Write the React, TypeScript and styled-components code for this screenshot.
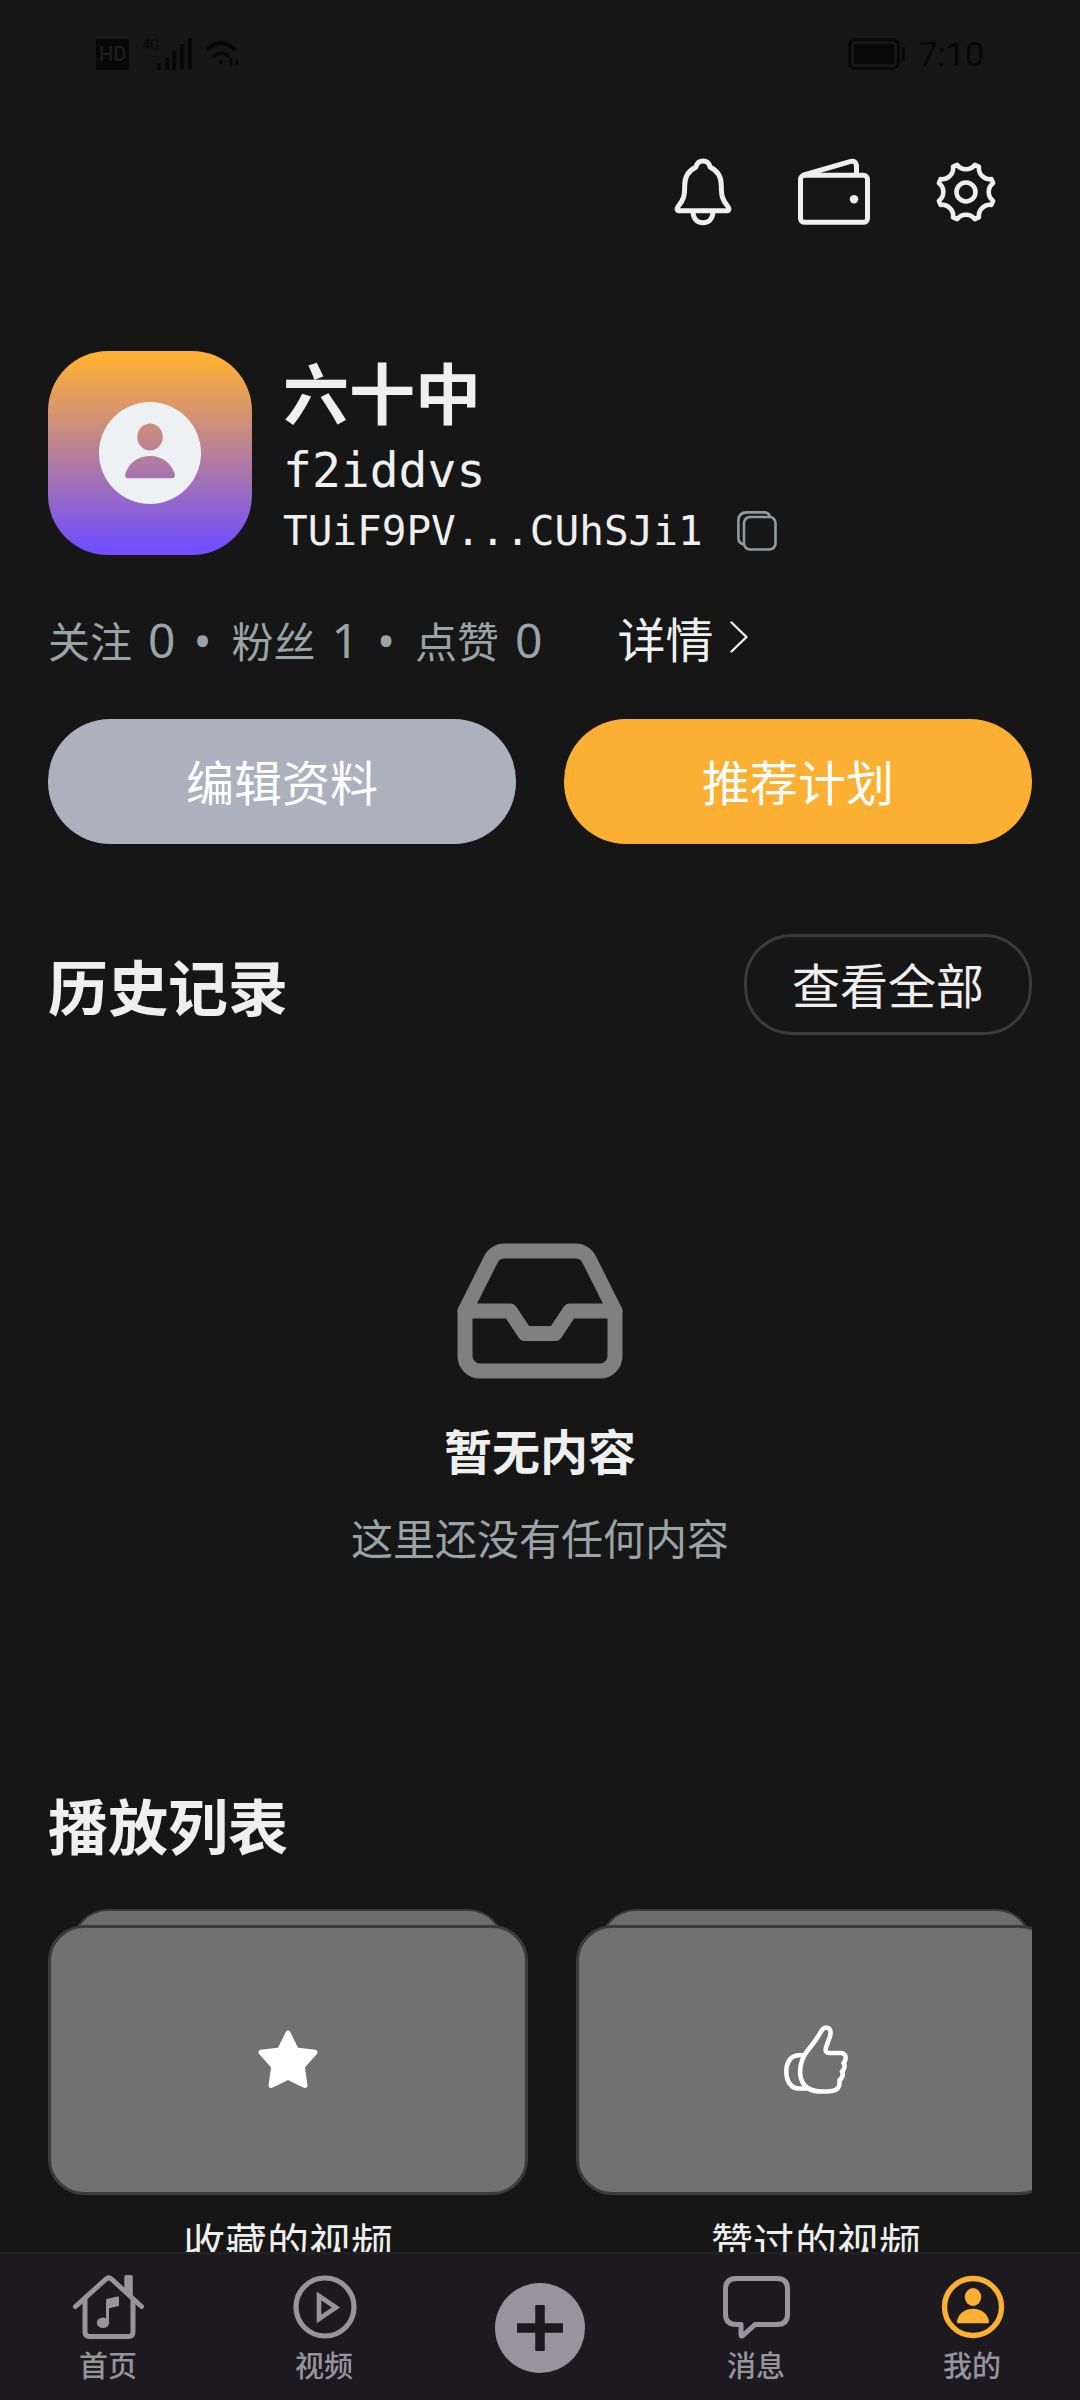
import React from "react";
import styled, { createGlobalStyle } from "styled-components";

const color = {
  page: "#161616",
  nav: "#1c191f",
  text: "#efefef",
  muted: "#9aa3a6",
  accent: "#fbb034",
  slate: "#abb1bd",
  line: "#3b3b3b",
  card: "#717171",
  tab: "#98949b",
  status: "#080808",
};

const cjk = `"Noto Sans CJK SC", "Noto Sans", sans-serif`;
const latin = `"Noto Sans", "Noto Sans CJK SC", sans-serif`;
const mono = `"DejaVu Sans Mono", "Noto Sans CJK SC", monospace`;

const GlobalStyle = createGlobalStyle`
  *, *::before, *::after { box-sizing: border-box; }
  body { margin: 0; background: ${color.page}; color: ${color.text}; font-family: ${cjk}; }
  h1, h2, h3, p, dl, dt, dd, ul { margin: 0; padding: 0; }
  ul { list-style: none; }
  button { margin: 0; padding: 0; border: 0; background: none; color: inherit; font-family: inherit; cursor: pointer; }
  a { color: inherit; text-decoration: none; }
  svg { display: block; flex: none; }
`;

const Shell = styled.div`
  display: flex;
  flex-direction: column;
  height: 100vh;
  background: ${color.page};
`;

const Scroller = styled.main`
  flex: 1;
  min-height: 0;
  overflow-y: auto;
  scrollbar-width: none;
`;

const StatusBar = styled.div`
  display: flex;
  align-items: center;
  justify-content: space-between;
  height: 108px;
  padding: 0 96px;
  color: ${color.status};
`;

const StatusGroup = styled.div<{ $gap: number }>`
  display: flex;
  align-items: center;
  gap: ${(p) => p.$gap}px;
`;

const Clock = styled.span`
  font: 34px/40px Roboto, sans-serif;
`;

const Toolbar = styled.header`
  display: flex;
  align-items: center;
  justify-content: flex-end;
  gap: 36px;
  height: 168px;
  padding: 0 66px;
`;

const IconButton = styled.button`
  display: grid;
  place-items: center;
  width: 96px;
  height: 96px;
`;

const Content = styled.div`
  padding: 75px 48px 96px;
`;

const Profile = styled.section`
  display: flex;
  gap: 31px;
`;

const Avatar = styled.div`
  display: grid;
  place-items: center;
  flex: none;
  width: 204px;
  height: 204px;
  border-radius: 60px;
  background: linear-gradient(#fdb036 4%, #724ffb 96%);
`;

const Identity = styled.div`
  display: flex;
  flex-direction: column;
`;

const DisplayName = styled.h1`
  margin-bottom: 10px;
  font-size: 66px;
  line-height: 78px;
  font-weight: 700;
`;

const Handle = styled.p`
  font: 48px/62px ${mono};
`;

const AddressRow = styled.div`
  display: flex;
  align-items: center;
  gap: 34px;
  font: 41px/60px ${mono};
`;

const CopyButton = styled.button`
  color: #939b9e;
`;

const StatsRow = styled.div`
  display: flex;
  align-items: baseline;
  gap: 75px;
  margin-top: 46px;
`;

const Stats = styled.dl`
  display: flex;
  align-items: baseline;
  gap: 18px;
  color: ${color.muted};
`;

const Stat = styled.div`
  display: flex;
  align-items: baseline;
  gap: 16px;

  dt { font-size: 42px; line-height: 60px; }
  dd { font: 48px/60px ${latin}; }

  & + &::before {
    content: "•";
    margin-right: 4px;
    font: 48px/60px ${latin};
  }
`;

const DetailLink = styled.a`
  display: flex;
  align-items: center;
  gap: 16px;
  font-size: 48px;
  line-height: 60px;
`;

const Actions = styled.div`
  display: grid;
  grid-template-columns: 1fr 1fr;
  gap: 48px;
  margin-top: 49px;
`;

const ActionButton = styled.button<{ $fill: string }>`
  height: 125px;
  padding-bottom: 3px;
  border-radius: 62px;
  background: ${(p) => p.$fill};
  color: #fff;
  font-size: 48px;
  line-height: 60px;
`;

const SectionHead = styled.div`
  display: flex;
  align-items: center;
  justify-content: space-between;
`;

const SectionTitle = styled.h2`
  font-size: 60px;
  line-height: 72px;
  font-weight: 700;
`;

const History = styled.section`
  margin-top: 90px;
`;

const OutlineButton = styled.button`
  height: 101px;
  padding: 0 45px 3px;
  border: 3px solid ${color.line};
  border-radius: 48px;
  font-size: 48px;
  line-height: 60px;
`;

const Empty = styled.div`
  display: flex;
  flex-direction: column;
  align-items: center;
  padding-top: 186px;
`;

const EmptyTitle = styled.h3`
  margin-top: 18px;
  font-size: 48px;
  line-height: 60px;
  font-weight: 700;
`;

const EmptyText = styled.p`
  margin-top: 28px;
  color: ${color.muted};
  font-size: 42px;
  line-height: 60px;
`;

const Playlists = styled.section`
  margin-top: 221px;
`;

const CardRow = styled.ul`
  display: flex;
  gap: 48px;
  margin-top: 49px;
  overflow-x: auto;
  scrollbar-width: none;
`;

const Card = styled.li`
  flex: 0 0 480px;
`;

const CardLink = styled.a`
  display: block;
  text-align: center;
`;

const CardBack = styled.div`
  height: 48px;
  margin: 0 24px -32px;
  border: 2px solid ${color.line};
  border-radius: 36px 36px 0 0;
  background: #6d6d6d;
`;

const CardCover = styled.div`
  position: relative;
  display: grid;
  place-items: center;
  aspect-ratio: 16 / 9;
  border: 3px solid ${color.line};
  border-radius: 36px;
  background: ${color.card};
`;

const CardTitle = styled.h3`
  margin-top: 16px;
  font-size: 42px;
  line-height: 60px;
  font-weight: 400;
`;

const TabBar = styled.nav`
  display: grid;
  grid-template-columns: repeat(5, 1fr);
  flex: none;
  padding: 20px 0 18px;
  border-top: 2px solid #222123;
  background: ${color.nav};
  color: ${color.tab};
`;

const Tab = styled.a`
  display: flex;
  flex-direction: column;
  align-items: center;
  gap: 6px;
  font-size: 29px;
  line-height: 36px;
  font-weight: 500;
`;

const CreateButton = styled.button`
  display: grid;
  place-items: center;
  place-self: center;
  width: 90px;
  height: 90px;
  border-radius: 50%;
  background: ${color.tab};
  color: ${color.nav};
`;

/* Eight blunt teeth joined by concave arcs. */
function gearPath(c: number, r: number) {
  const at = (deg: number) => {
    const a = (deg * Math.PI) / 180;
    return `${(c + r * Math.cos(a)).toFixed(2)} ${(c + r * Math.sin(a)).toFixed(2)}`;
  };
  let d = `M${at(18)}`;
  for (let k = 0; k < 8; k++) {
    const t = 22.5 + 45 * k;
    d += `L${at(t + 4.5)}A11 11 0 0 0 ${at(t + 40.5)}`;
  }
  return d + "Z";
}

const line = {
  fill: "none",
  stroke: "currentColor",
  strokeLinecap: "round" as const,
  strokeLinejoin: "round" as const,
};

const BellIcon = () => (
  <svg width="72" height="72" viewBox="0 0 72 72" {...line} strokeWidth="5">
    <path d="M37 5c-3.800 0-6.200 2.400-7.200 6.200C22 14.800 18.700 21 18.700 29.500c0 10.500-1 14-6.200 20.500-2.600 3.200-1.200 4.800 1.500 4.800h46c2.700 0 4.100-1.600 1.500-4.800-5.200-6.500-6.200-10-6.200-20.500 0-8.500-3.300-14.700-11.100-18.300C43.200 7.400 40.800 5 37 5z" />
    <path d="M27 55.500c0 7 4.300 11.200 10 11.200s10-4.200 10-11.200" />
  </svg>
);

const WalletIcon = () => (
  <svg width="72" height="72" viewBox="0 0 72 72" {...line} strokeWidth="5">
    <rect x="2.500" y="19.300" width="67" height="47" rx="4" />
    <path d="M6 19L52 5.600Q58.500 4 58.500 11V18" />
    <circle cx="56" cy="43.300" r="4.200" fill="currentColor" stroke="none" />
  </svg>
);

const GearIcon = () => (
  <svg width="72" height="72" viewBox="0 0 72 72" {...line} strokeWidth="4.600">
    <path d={gearPath(36, 28.5)} />
    <circle cx="36" cy="36" r="9.500" />
  </svg>
);

const PersonDisc = () => (
  <svg width="102" height="102" viewBox="0 0 102 102" fill="#eef1f3" fillRule="evenodd">
    <path d="M51 0a51 51 0 1 1 0 102A51 51 0 1 1 51 0zM51 21.500a12.700 13.500 0 1 0 0 27a12.700 13.500 0 1 0 0-27zM51 54c-12 0-21 7-24.600 17.500-.9 3 .2 4.800 2.600 4.800h44c2.400 0 3.500-1.800 2.600-4.800C72 61 63 54 51 54z" />
  </svg>
);

const CopyIcon = () => (
  <svg width="40" height="40" viewBox="0 0 40 40" {...line} strokeWidth="2.600">
    <rect x="7" y="6" width="31.500" height="32.500" rx="6" />
    <path d="M33 5.500C32 2.500 30 1.400 27 1.400H10C4.500 1.400 1.400 4.500 1.400 10v17c0 3.500 1.800 5.500 4.800 6.300" />
  </svg>
);

const ChevronIcon = () => (
  <svg width="18" height="32" viewBox="0 0 18 32" {...line} strokeWidth="2.400">
    <path d="M1.500 1.500L16.500 16L1.500 30.500" />
  </svg>
);

const InboxIcon = () => (
  <svg width="180" height="180" viewBox="0 0 24 24" {...line} strokeWidth="2" stroke="#808080">
    <path d="M22 12h-6l-2 3h-4l-2-3H2" />
    <path d="M5.450 5.110L2 12v6a2 2 0 0 0 2 2h16a2 2 0 0 0 2-2v-6l-3.450-6.890A2 2 0 0 0 16.760 4H7.240a2 2 0 0 0-1.790 1.110z" />
  </svg>
);

const StarIcon = () => (
  <svg width="60" height="60" viewBox="0 0 60 60" fill="#fff" stroke="#fff" strokeWidth="5" strokeLinejoin="round">
    <path d="M30 3L38.300 20L57 22.300L44.300 36.500L47 55.500L30 47.300L13 55.500L15.700 36.500L3 22.300L21.700 20z" />
  </svg>
);

const ThumbIcon = () => (
  <svg width="64" height="70" viewBox="0 0 64 70" {...line} strokeWidth="4.600" stroke="#fff">
    <path d="M37 6.500C39 2.500 42 1.800 44.500 3.200c2.800 1.600 2.300 5 1.500 8L42 22.500c-1 3.500 0 5.500 3.500 5.500h11c4 0 5.500 2.500 5 5.500.3 2-1 3-2 4.500 2 2.500 1 6-1.500 8.500 1.500 3 .5 6.500-2.500 8.500.8 7-2 10.500-8 11-9 1-19 .5-24-3-9-6.500-9.500-20-3-33C23.500 24.500 31 18 37 6.500z" />
    <path d="M20 30.200h-5C7 30.200 2.300 37 2.300 46.500S7 63.500 15 63.500h9" />
  </svg>
);

const HomeIcon = () => (
  <svg width="72" height="66" viewBox="0 0 72 66" {...line} strokeWidth="5">
    <path d="M3.500 32.500L34 5q2.700-2.400 5.400 0L69.500 32.500" />
    <path d="M13 26v32q0 4.500 4.500 4.500h39q4.500 0 4.500-4.500V26" />
    <path d="M52.300 18V3q0-2 2-2h4.500q2 0 2 2v21z" fill="currentColor" stroke="none" />
    <g fill="currentColor" stroke="none">
      <path d="M34 26.500q0-1.500 1.500-1.800L45.500 22.600q1.500-.2 1.500 1.200v8.200l-10 2.200V48h-3z" />
      <ellipse cx="31" cy="48.700" rx="6.200" ry="5.300" />
    </g>
  </svg>
);

const PlayIcon = () => (
  <svg width="72" height="66" viewBox="0 0 72 66" {...line} strokeWidth="5.200">
    <circle cx="37" cy="33" r="29" />
    <path d="M31 22L48 33.500L31 45z" strokeWidth="4.600" strokeLinejoin="miter" />
  </svg>
);

const PlusIcon = () => (
  <svg width="46" height="46" viewBox="0 0 46 46" stroke="currentColor" strokeWidth="9.500">
    <path d="M23 0V46M0 23H46" />
  </svg>
);

const MessageIcon = () => (
  <svg width="72" height="66" viewBox="0 0 72 66" {...line} strokeWidth="5">
    <path d="M16.500 4.500h40.500q10.500 0 10.500 10.500v25q0 10.500-10.500 10.500H35L23 61.500q-2 1.500-2-1v-10h-4.500Q5.500 50.500 5.500 40V15Q5.500 4.500 16.500 4.500z" />
  </svg>
);

const MeIcon = () => (
  <svg width="72" height="66" viewBox="0 0 72 66" fill={color.accent}>
    <circle cx="37" cy="33" r="28.500" fill="none" stroke={color.accent} strokeWidth="5.400" />
    <ellipse cx="37" cy="23" rx="8.200" ry="9" />
    <path d="M37 34.700c-8.500 0-14.500 5-16 12.300-.2 1.500.3 2.300 1.500 2.300h29c1.200 0 1.700-.8 1.500-2.300-1.500-7.300-7.500-12.300-16-12.300z" />
  </svg>
);

const HdBadge = styled.span`
  padding: 0 3px;
  border-radius: 2px;
  background: ${color.status};
  color: #1d1d1d;
  font: 500 20px/31px Roboto, sans-serif;
`;

const NetworkLabel = styled.span`
  align-self: flex-start;
  margin-right: -16px;
  font: 14px/16px Roboto, sans-serif;
`;

const SignalIcon = () => (
  <svg width="36" height="34" viewBox="0 0 36 34" fill="currentColor">
    <path d="M0 26h4v7H0zM8 20h4v13H8zM15 13h4v20h-4zM23 7h4v26h-4zM31 1h4v32h-4z" />
  </svg>
);

const WifiIcon = () => (
  <svg width="34" height="28" viewBox="0 0 34 28" {...line} strokeWidth="4">
    <path d="M2 9q13-12 26 0M8 16q7-6 14 0" />
    <circle cx="15" cy="22" r="2" fill="currentColor" stroke="none" />
    <path d="M25 19v6M31 21v4" strokeWidth="2.500" />
  </svg>
);

const BatteryIcon = () => (
  <svg width="58" height="32" viewBox="0 0 58 32" fill="currentColor">
    <rect x="1.500" y="1.500" width="49" height="29" rx="6" fill="none" stroke="currentColor" strokeWidth="3" />
    <rect x="6" y="6" width="40" height="20" rx="2" />
    <rect x="54" y="9" width="3" height="14" />
  </svg>
);

const stats = [
  { label: "关注", value: 0 },
  { label: "粉丝", value: 1 },
  { label: "点赞", value: 0 },
];

const playlists = [
  { title: "收藏的视频", icon: <StarIcon /> },
  { title: "赞过的视频", icon: <ThumbIcon /> },
];

export default function App() {
  return (
    <Shell>
      <GlobalStyle />
      <Scroller>
        <StatusBar>
          <StatusGroup $gap={13}>
            <HdBadge>HD</HdBadge>
            <NetworkLabel>4G</NetworkLabel>
            <SignalIcon />
            <WifiIcon />
          </StatusGroup>
          <StatusGroup $gap={12}>
            <BatteryIcon />
            <Clock>7:10</Clock>
          </StatusGroup>
        </StatusBar>

        <Toolbar>
          <IconButton aria-label="通知"><BellIcon /></IconButton>
          <IconButton aria-label="钱包"><WalletIcon /></IconButton>
          <IconButton aria-label="设置"><GearIcon /></IconButton>
        </Toolbar>

        <Content>
          <Profile>
            <Avatar><PersonDisc /></Avatar>
            <Identity>
              <DisplayName>六十中</DisplayName>
              <Handle>f2iddvs</Handle>
              <AddressRow>
                TUiF9PV...CUhSJi1
                <CopyButton aria-label="复制地址"><CopyIcon /></CopyButton>
              </AddressRow>
            </Identity>
          </Profile>

          <StatsRow>
            <Stats>
              {stats.map((s) => (
                <Stat key={s.label}>
                  <dt>{s.label}</dt>
                  <dd>{s.value}</dd>
                </Stat>
              ))}
            </Stats>
            <DetailLink href="#detail">
              详情
              <ChevronIcon />
            </DetailLink>
          </StatsRow>

          <Actions>
            <ActionButton $fill={color.slate}>编辑资料</ActionButton>
            <ActionButton $fill={color.accent}>推荐计划</ActionButton>
          </Actions>

          <History>
            <SectionHead>
              <SectionTitle>历史记录</SectionTitle>
              <OutlineButton>查看全部</OutlineButton>
            </SectionHead>
            <Empty>
              <InboxIcon />
              <EmptyTitle>暂无内容</EmptyTitle>
              <EmptyText>这里还没有任何内容</EmptyText>
            </Empty>
          </History>

          <Playlists>
            <SectionTitle>播放列表</SectionTitle>
            <CardRow>
              {playlists.map((p) => (
                <Card key={p.title}>
                  <CardLink href="#playlist">
                    <CardBack />
                    <CardCover>{p.icon}</CardCover>
                    <CardTitle>{p.title}</CardTitle>
                  </CardLink>
                </Card>
              ))}
            </CardRow>
          </Playlists>
        </Content>
      </Scroller>

      <TabBar>
        <Tab href="#home"><HomeIcon />首页</Tab>
        <Tab href="#video"><PlayIcon />视频</Tab>
        <CreateButton aria-label="发布"><PlusIcon /></CreateButton>
        <Tab href="#message"><MessageIcon />消息</Tab>
        <Tab href="#me" aria-current="page"><MeIcon />我的</Tab>
      </TabBar>
    </Shell>
  );
}
